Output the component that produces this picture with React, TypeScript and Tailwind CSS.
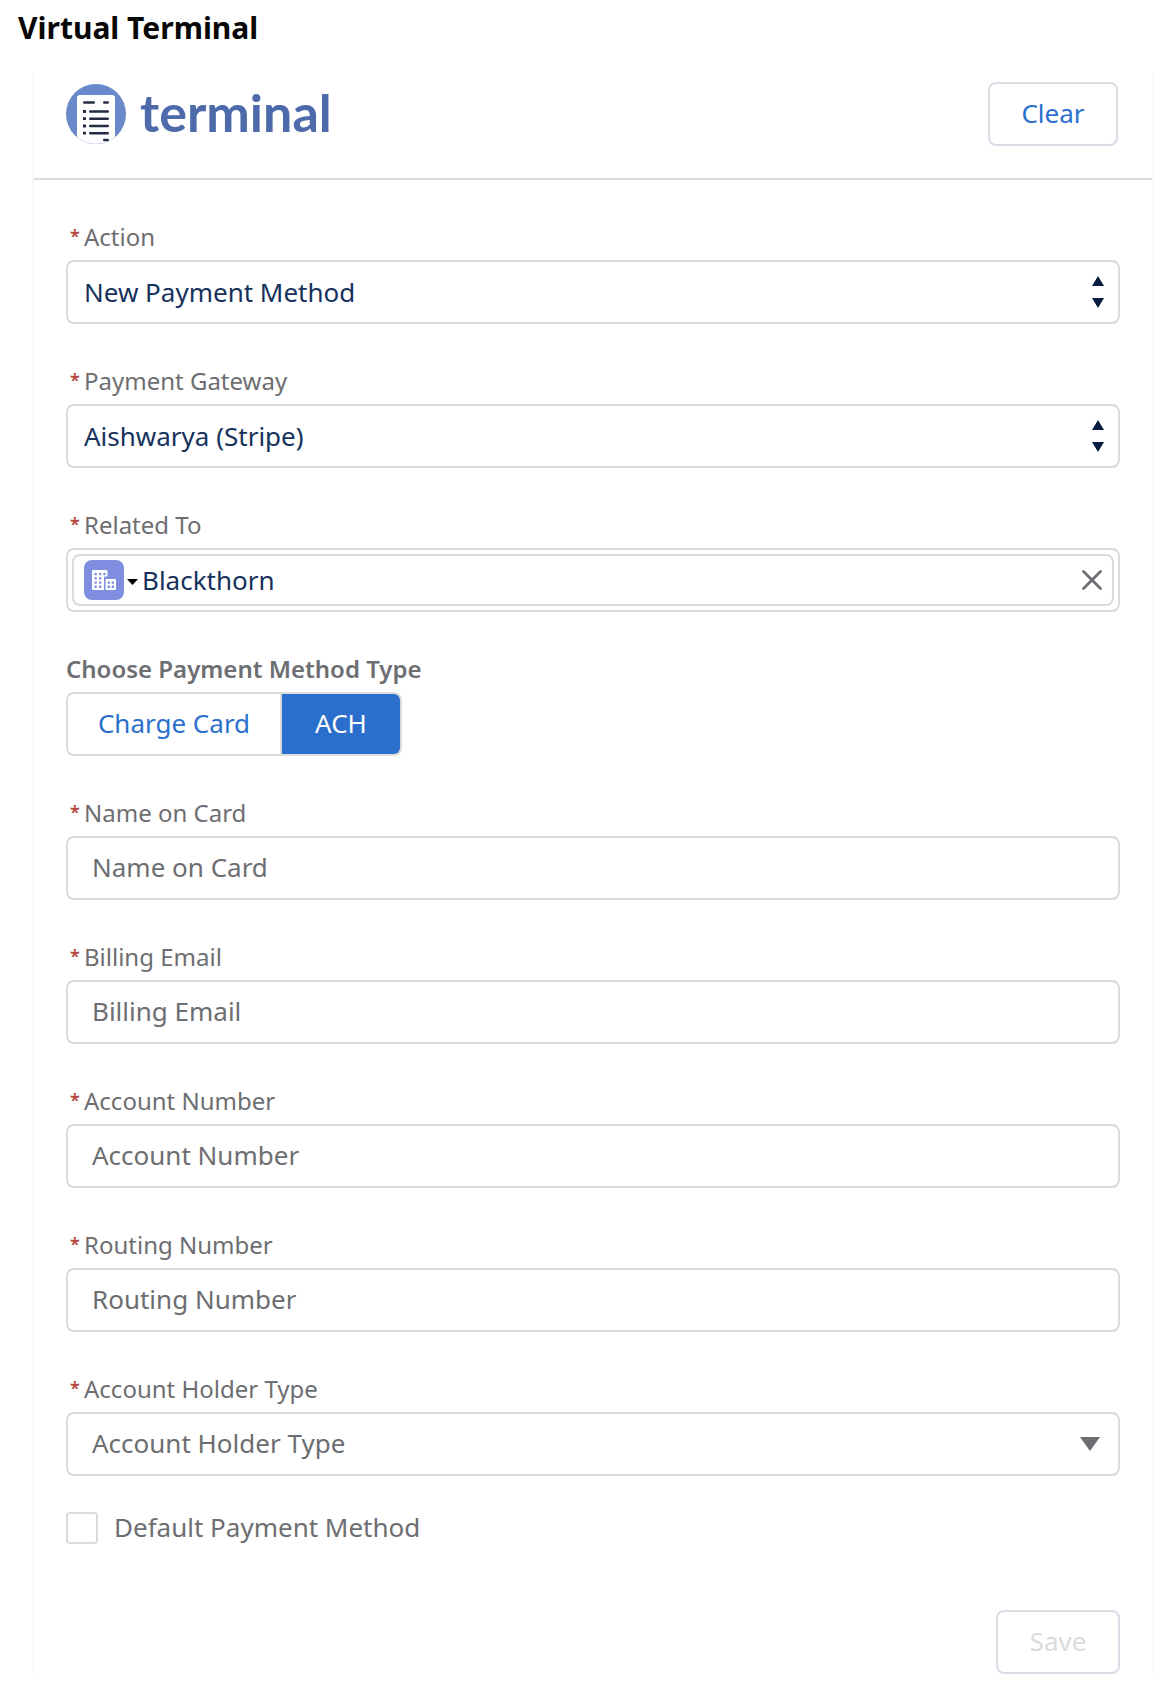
import { useState } from 'react';
import type { ReactNode } from 'react';

const boxClass =
  'h-16 w-full rounded-lg border-2 border-[#dadbdb] bg-white text-[26px] outline-none';

interface FieldProps {
  id: string;
  label: string;
  children: ReactNode;
}

function Field({ id, label, children }: FieldProps) {
  return (
    <div>
      <label htmlFor={id} className="mb-1 flex h-9 items-start gap-1 pl-1 text-[24px] leading-[34px] text-[#6d6e71]">
        <span className="w-2.5 text-center text-[18px] leading-8 font-semibold text-[#b8443a]">*</span>
        {label}
      </label>
      {children}
    </div>
  );
}

function TextField({ id, label }: { id: string; label: string }) {
  return (
    <Field id={id} label={label}>
      <input
        id={id}
        type="text"
        placeholder={label}
        className={`${boxClass} px-6 pb-0.5 text-[#16325c] placeholder:text-[#6d6e71]`}
      />
    </Field>
  );
}

function PickField({ id, label, value }: { id: string; label: string; value: string }) {
  return (
    <Field id={id} label={label}>
      <div className="relative">
        <select id={id} className={`${boxClass} appearance-none px-4 text-[#16325c]`}>
          <option>{value}</option>
        </select>
        {/* Up / down arrows */}
        <svg className="pointer-events-none absolute top-4 right-4 h-8 w-3" viewBox="0 0 12 32" fill="#061c3f">
          <path d="M6 0l6 10H0z" />
          <path d="M0 22h12L6 32z" />
        </svg>
      </div>
    </Field>
  );
}

function TerminalMark() {
  return (
    <svg className="size-15" viewBox="0 0 60 60">
      <defs>
        <clipPath id="mark">
          <circle cx="30" cy="30" r="30" />
        </clipPath>
      </defs>
      <circle cx="30" cy="30" r="30" fill="#688aca" />
      <g clipPath="url(#mark)">
        <rect x="11" y="11" width="38" height="52" rx="3" fill="#fff" />
      </g>
      <path d="M11 53a30 30 0 0 0 38 0" fill="none" stroke="#c5d2ec" strokeWidth="0.6" strokeDasharray="3 1" />
      <g stroke="#232c43" strokeWidth="2.6" strokeLinecap="round">
        <path d="M18.300 18.500h9.400M38.300 18.500h3.400M38.300 56h3.400" />
        <path d="M24.300 27.500h17.400M24.300 34.700h17.400M24.300 42h17.400M24.300 49.200h17.400" />
      </g>
      <path
        d="M17 27.500h3M17 34.700h3M17 42h3M17 49.200h3"
        stroke="#232c43"
        strokeWidth="2.8"
      />
    </svg>
  );
}

function AccountIcon() {
  return (
    <span className="flex size-10 items-center justify-center rounded-lg bg-[#7f8de1]">
      <svg className="h-5 w-6" viewBox="0 0 24 20">
        <path fill="#fff" d="M1 0h13.500a1 1 0 0 1 1 1v5.500H13a1 1 0 0 0-1 1V20H1a1 1 0 0 1-1-1V1a1 1 0 0 1 1-1zM14.500 9H23a1 1 0 0 1 1 1v9a1 1 0 0 1-1 1h-9.500V10a1 1 0 0 1 1-1z" />
        <g fill="#7f8de1">
          <path d="M2.500 3h2.300v2.300H2.500zM7 3h2.300v2.300H7zM11.300 3h2.300v2.300h-2.300z" />
          <path d="M2.500 7.200h2.300v2.300H2.500zM7 7.200h2.300v2.300H7z" />
          <path d="M2.500 11.400h2.300v2.300H2.500zM7 11.400h2.300v2.300H7z" />
          <path d="M2.500 15.600h2.300v2.300H2.500zM7 15.600h2.300v2.300H7z" />
          <path d="M15.700 11.400H18v2.300h-2.300zM19.700 11.400H22v2.300h-2.300zM15.700 15.600H18v2.300h-2.300zM19.700 15.600H22v2.300h-2.300z" />
        </g>
      </svg>
    </span>
  );
}

export default function App() {
  const [method, setMethod] = useState('ACH');
  const [related, setRelated] = useState('Blackthorn');

  return (
    <div className="bg-white pb-3 font-['Noto_Sans',sans-serif]">
      <h1 className="h-[74px] px-[18px] pt-1.5 text-[30px] leading-[44px] font-bold text-[#080707]">
        Virtual Terminal
      </h1>

      <main className="mr-3 ml-8 border-x-2 border-[#f8f8f8]">
        <header className="flex items-start justify-between border-b-2 border-[#dadbdb] pt-2 pr-[34px] pb-8 pl-8">
          <div className="flex items-start gap-3.5 pt-0.5">
            <TerminalMark />
            <span className="font-['Lato',sans-serif] text-[52px] leading-[56px] font-bold text-[#4d6bab]">
              terminal
            </span>
          </div>
          <button
            type="button"
            className="h-16 w-[130px] rounded-lg border-2 border-[#d8dde6] pb-0.5 text-[26px] text-[#2a6fcb]"
          >
            Clear
          </button>
        </header>

        <form className="flex flex-col gap-10 px-8 pt-10">
          <PickField id="action" label="Action" value="New Payment Method" />
          <PickField id="gateway" label="Payment Gateway" value="Aishwarya (Stripe)" />

          <Field id="related" label="Related To">
            <div className="h-16 rounded-lg border-2 border-[#dadbdb] p-1">
              <div className="flex h-full items-center rounded-lg border-2 border-[#dadbdb] pr-2 pl-2.5">
                <button type="button" aria-label="Object type" className="flex items-center gap-[3px]">
                  <AccountIcon />
                  <svg className="mt-1 h-1.5 w-[11px]" viewBox="0 0 11 6">
                    <path d="M0 0h11L5.500 6z" />
                  </svg>
                </button>
                <input
                  id="related"
                  type="text"
                  value={related}
                  onChange={(e) => setRelated(e.target.value)}
                  className="ml-1 min-w-0 flex-1 text-[26px] leading-10 text-[#16325c] outline-none"
                />
                <button type="button" aria-label="Remove" onClick={() => setRelated('')}>
                  <svg className="size-6" viewBox="0 0 24 24" stroke="#6d6e71" strokeWidth="2.8" strokeLinecap="round">
                    <path d="M3.500 3.500l17 17M20.500 3.500l-17 17" />
                  </svg>
                </button>
              </div>
            </div>
          </Field>

          <div role="group" aria-labelledby="method-type">
            <div id="method-type" className="mb-1 h-9 text-[24px] leading-[34px] font-semibold text-[#6d6e71]">
              Choose Payment Method Type
            </div>
            <div className="inline-flex h-16 overflow-hidden rounded-lg border-2 border-[#dadbdb] align-top text-[26px]">
              {['Charge Card', 'ACH'].map((name) => (
                <button
                  key={name}
                  type="button"
                  aria-pressed={method === name}
                  onClick={() => setMethod(name)}
                  className={`w-[118px] border-[#dadbdb] pb-0.5 first:w-[214px] first:border-r-2 ${
                    method === name ? 'bg-[#2a6fcb] text-white' : 'bg-white text-[#2a6fcb]'
                  }`}
                >
                  {name}
                </button>
              ))}
            </div>
          </div>

          <TextField id="name" label="Name on Card" />
          <TextField id="email" label="Billing Email" />
          <TextField id="account" label="Account Number" />
          <TextField id="routing" label="Routing Number" />

          <Field id="holder" label="Account Holder Type">
            <div className="relative">
              <select id="holder" className={`${boxClass} appearance-none px-6 pb-0.5 text-[#6d6e71]`}>
                <option>Account Holder Type</option>
              </select>
              <svg className="pointer-events-none absolute top-[25px] right-5 h-3.5 w-5" viewBox="0 0 20 14" fill="#6d6e71">
                <path d="M0 0h20L10 14z" />
              </svg>
            </div>
          </Field>

          <label className="-mt-1 flex h-8 items-start gap-4 text-[26px] leading-[30px] text-[#6d6e71]">
            <input
              type="checkbox"
              className="size-8 appearance-none rounded-sm border-2 border-[#dadbdb] bg-white checked:bg-[#2a6fcb]"
            />
            Default Payment Method
          </label>

          <div className="flex justify-end pt-[26px]">
            <button
              type="button"
              disabled
              className="h-16 w-[124px] rounded-lg border-2 border-[#d8dde6] pb-0.5 text-[26px] text-[#dadbdb]"
            >
              Save
            </button>
          </div>
        </form>
      </main>
    </div>
  );
}
